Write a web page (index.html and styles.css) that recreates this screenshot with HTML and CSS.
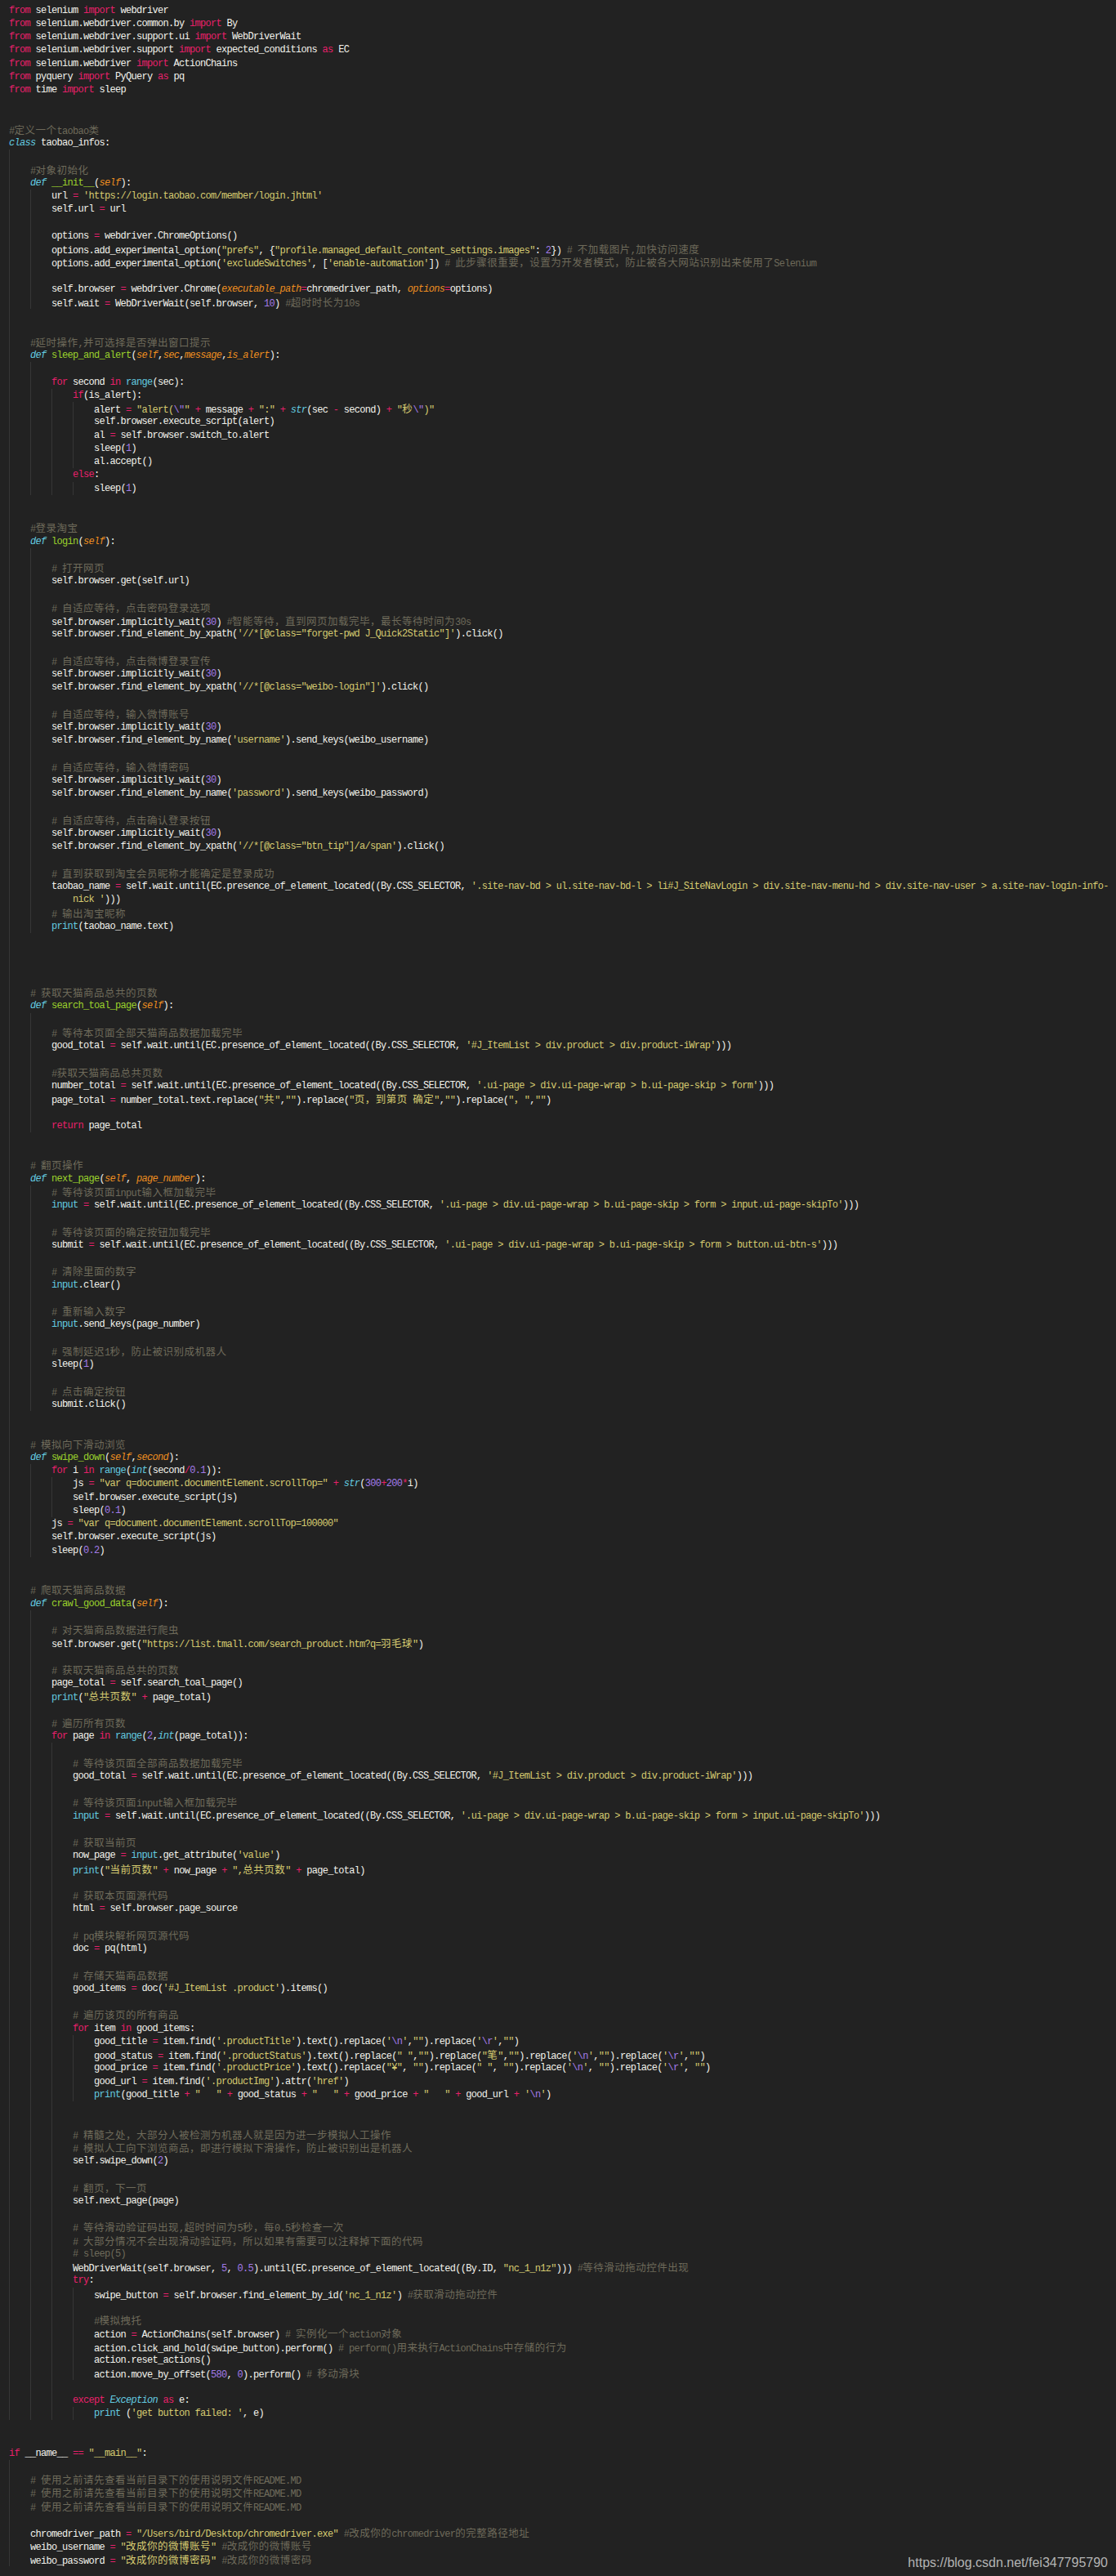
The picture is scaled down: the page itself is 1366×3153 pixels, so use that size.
FILE: index.html
```html
<!DOCTYPE html>
<html lang="zh-CN">
<head>
<meta charset="utf-8">
<title>taobao_infos.py</title>
<link rel="stylesheet" href="styles.css">
</head>
<body>
<main class="code">
<div class="l"><span class="k">from</span> selenium <span class="k">import</span> webdriver</div>
<div class="l"><span class="k">from</span> selenium.webdriver.common.by <span class="k">import</span> By</div>
<div class="l"><span class="k">from</span> selenium.webdriver.support.ui <span class="k">import</span> WebDriverWait</div>
<div class="l"><span class="k">from</span> selenium.webdriver.support <span class="k">import</span> expected_conditions <span class="k">as</span> EC</div>
<div class="l"><span class="k">from</span> selenium.webdriver <span class="k">import</span> ActionChains</div>
<div class="l"><span class="k">from</span> pyquery <span class="k">import</span> PyQuery <span class="k">as</span> pq</div>
<div class="l"><span class="k">from</span> time <span class="k">import</span> sleep</div>
<div class="l"></div>
<div class="l"></div>
<div class="l"><span class="c">#<span class="z">定义一个</span>taobao<span class="z">类</span></span></div>
<div class="l"><span class="d">class</span> taobao_infos:</div>
<div class="l g1"></div>
<div class="l g1">    <span class="c">#<span class="z">对象初始化</span></span></div>
<div class="l g1">    <span class="d">def</span> <span class="f">__init__</span>(<span class="p">self</span>):</div>
<div class="l g2">        url <span class="k">=</span> <span class="s">'https://login.taobao.com/member/login.jhtml'</span></div>
<div class="l g2">        self.url <span class="k">=</span> url</div>
<div class="l g2"></div>
<div class="l g2">        options <span class="k">=</span> webdriver.ChromeOptions()</div>
<div class="l g2">        options.add_experimental_option(<span class="s">"prefs"</span>, {<span class="s">"profile.managed_default_content_settings.images"</span>: <span class="n">2</span>}) <span class="c"># <span class="z">不加载图片</span>,<span class="z">加快访问速度</span></span></div>
<div class="l g2">        options.add_experimental_option(<span class="s">'excludeSwitches'</span>, [<span class="s">'enable-automation'</span>]) <span class="c"># <span class="z">此步骤很重要&#65292;设置为开发者模式&#65292;防止被各大网站识别出来使用了</span>Selenium</span></div>
<div class="l g2"></div>
<div class="l g2">        self.browser <span class="k">=</span> webdriver.Chrome(<span class="p">executable_path</span><span class="k">=</span>chromedriver_path, <span class="p">options</span><span class="k">=</span>options)</div>
<div class="l g2">        self.wait <span class="k">=</span> WebDriverWait(self.browser, <span class="n">10</span>) <span class="c">#<span class="z">超时时长为</span>10s</span></div>
<div class="l g1"></div>
<div class="l g1"></div>
<div class="l g1">    <span class="c">#<span class="z">延时操作</span>,<span class="z">并可选择是否弹出窗口提示</span></span></div>
<div class="l g1">    <span class="d">def</span> <span class="f">sleep_and_alert</span>(<span class="p">self</span>,<span class="p">sec</span>,<span class="p">message</span>,<span class="p">is_alert</span>):</div>
<div class="l g2"></div>
<div class="l g2">        <span class="k">for</span> second <span class="k">in</span> <span class="b">range</span>(sec):</div>
<div class="l g3">            <span class="k">if</span>(is_alert):</div>
<div class="l g4">                alert <span class="k">=</span> <span class="s">"alert(<span class="n">\"</span>"</span> <span class="k">+</span> message <span class="k">+</span> <span class="s">":"</span> <span class="k">+</span> <span class="d">str</span>(sec <span class="k">-</span> second) <span class="k">+</span> <span class="s">"<span class="z">秒</span><span class="n">\"</span>)"</span></div>
<div class="l g4">                self.browser.execute_script(alert)</div>
<div class="l g4">                al <span class="k">=</span> self.browser.switch_to.alert</div>
<div class="l g4">                sleep(<span class="n">1</span>)</div>
<div class="l g4">                al.accept()</div>
<div class="l g3">            <span class="k">else</span>:</div>
<div class="l g4">                sleep(<span class="n">1</span>)</div>
<div class="l g1"></div>
<div class="l g1"></div>
<div class="l g1">    <span class="c">#<span class="z">登录淘宝</span></span></div>
<div class="l g1">    <span class="d">def</span> <span class="f">login</span>(<span class="p">self</span>):</div>
<div class="l g2"></div>
<div class="l g2">        <span class="c"># <span class="z">打开网页</span></span></div>
<div class="l g2">        self.browser.get(self.url)</div>
<div class="l g2"></div>
<div class="l g2">        <span class="c"># <span class="z">自适应等待&#65292;点击密码登录选项</span></span></div>
<div class="l g2">        self.browser.implicitly_wait(<span class="n">30</span>) <span class="c">#<span class="z">智能等待&#65292;直到网页加载完毕&#65292;最长等待时间为</span>30s</span></div>
<div class="l g2">        self.browser.find_element_by_xpath(<span class="s">'//*[@class="forget-pwd J_Quick2Static"]'</span>).click()</div>
<div class="l g2"></div>
<div class="l g2">        <span class="c"># <span class="z">自适应等待&#65292;点击微博登录宣传</span></span></div>
<div class="l g2">        self.browser.implicitly_wait(<span class="n">30</span>)</div>
<div class="l g2">        self.browser.find_element_by_xpath(<span class="s">'//*[@class="weibo-login"]'</span>).click()</div>
<div class="l g2"></div>
<div class="l g2">        <span class="c"># <span class="z">自适应等待&#65292;输入微博账号</span></span></div>
<div class="l g2">        self.browser.implicitly_wait(<span class="n">30</span>)</div>
<div class="l g2">        self.browser.find_element_by_name(<span class="s">'username'</span>).send_keys(weibo_username)</div>
<div class="l g2"></div>
<div class="l g2">        <span class="c"># <span class="z">自适应等待&#65292;输入微博密码</span></span></div>
<div class="l g2">        self.browser.implicitly_wait(<span class="n">30</span>)</div>
<div class="l g2">        self.browser.find_element_by_name(<span class="s">'password'</span>).send_keys(weibo_password)</div>
<div class="l g2"></div>
<div class="l g2">        <span class="c"># <span class="z">自适应等待&#65292;点击确认登录按钮</span></span></div>
<div class="l g2">        self.browser.implicitly_wait(<span class="n">30</span>)</div>
<div class="l g2">        self.browser.find_element_by_xpath(<span class="s">'//*[@class="btn_tip"]/a/span'</span>).click()</div>
<div class="l g2"></div>
<div class="l g2">        <span class="c"># <span class="z">直到获取到淘宝会员昵称才能确定是登录成功</span></span></div>
<div class="l g2">        taobao_name <span class="k">=</span> self.wait.until(EC.presence_of_element_located((By.CSS_SELECTOR, <span class="s">'.site-nav-bd &gt; ul.site-nav-bd-l &gt; li#J_SiteNavLogin &gt; div.site-nav-menu-hd &gt; div.site-nav-user &gt; a.site-nav-login-info-</span></div>
<div class="l g2">            <span class="s">nick '</span>)))</div>
<div class="l g2">        <span class="c"># <span class="z">输出淘宝昵称</span></span></div>
<div class="l g2">        <span class="b">print</span>(taobao_name.text)</div>
<div class="l g1"></div>
<div class="l g1"></div>
<div class="l g1"></div>
<div class="l g1"></div>
<div class="l g1">    <span class="c"># <span class="z">获取天猫商品总共的页数</span></span></div>
<div class="l g1">    <span class="d">def</span> <span class="f">search_toal_page</span>(<span class="p">self</span>):</div>
<div class="l g2"></div>
<div class="l g2">        <span class="c"># <span class="z">等待本页面全部天猫商品数据加载完毕</span></span></div>
<div class="l g2">        good_total <span class="k">=</span> self.wait.until(EC.presence_of_element_located((By.CSS_SELECTOR, <span class="s">'#J_ItemList &gt; div.product &gt; div.product-iWrap'</span>)))</div>
<div class="l g2"></div>
<div class="l g2">        <span class="c">#<span class="z">获取天猫商品总共页数</span></span></div>
<div class="l g2">        number_total <span class="k">=</span> self.wait.until(EC.presence_of_element_located((By.CSS_SELECTOR, <span class="s">'.ui-page &gt; div.ui-page-wrap &gt; b.ui-page-skip &gt; form'</span>)))</div>
<div class="l g2">        page_total <span class="k">=</span> number_total.text.replace(<span class="s">"<span class="z">共</span>"</span>,<span class="s">""</span>).replace(<span class="s">"<span class="z">页&#65292;到第页</span> <span class="z">确定</span>"</span>,<span class="s">""</span>).replace(<span class="s">"<span class="z">&#65292;</span>"</span>,<span class="s">""</span>)</div>
<div class="l g2"></div>
<div class="l g2">        <span class="k">return</span> page_total</div>
<div class="l g1"></div>
<div class="l g1"></div>
<div class="l g1">    <span class="c"># <span class="z">翻页操作</span></span></div>
<div class="l g1">    <span class="d">def</span> <span class="f">next_page</span>(<span class="p">self</span>, <span class="p">page_number</span>):</div>
<div class="l g2">        <span class="c"># <span class="z">等待该页面</span>input<span class="z">输入框加载完毕</span></span></div>
<div class="l g2">        <span class="b">input</span> <span class="k">=</span> self.wait.until(EC.presence_of_element_located((By.CSS_SELECTOR, <span class="s">'.ui-page &gt; div.ui-page-wrap &gt; b.ui-page-skip &gt; form &gt; input.ui-page-skipTo'</span>)))</div>
<div class="l g2"></div>
<div class="l g2">        <span class="c"># <span class="z">等待该页面的确定按钮加载完毕</span></span></div>
<div class="l g2">        submit <span class="k">=</span> self.wait.until(EC.presence_of_element_located((By.CSS_SELECTOR, <span class="s">'.ui-page &gt; div.ui-page-wrap &gt; b.ui-page-skip &gt; form &gt; button.ui-btn-s'</span>)))</div>
<div class="l g2"></div>
<div class="l g2">        <span class="c"># <span class="z">清除里面的数字</span></span></div>
<div class="l g2">        <span class="b">input</span>.clear()</div>
<div class="l g2"></div>
<div class="l g2">        <span class="c"># <span class="z">重新输入数字</span></span></div>
<div class="l g2">        <span class="b">input</span>.send_keys(page_number)</div>
<div class="l g2"></div>
<div class="l g2">        <span class="c"># <span class="z">强制延迟</span>1<span class="z">秒&#65292;防止被识别成机器人</span></span></div>
<div class="l g2">        sleep(<span class="n">1</span>)</div>
<div class="l g2"></div>
<div class="l g2">        <span class="c"># <span class="z">点击确定按钮</span></span></div>
<div class="l g2">        submit.click()</div>
<div class="l g1"></div>
<div class="l g1"></div>
<div class="l g1">    <span class="c"># <span class="z">模拟向下滑动浏览</span></span></div>
<div class="l g1">    <span class="d">def</span> <span class="f">swipe_down</span>(<span class="p">self</span>,<span class="p">second</span>):</div>
<div class="l g2">        <span class="k">for</span> i <span class="k">in</span> <span class="b">range</span>(<span class="d">int</span>(second<span class="k">/</span><span class="n">0.1</span>)):</div>
<div class="l g3">            js <span class="k">=</span> <span class="s">"var q=document.documentElement.scrollTop="</span> <span class="k">+</span> <span class="d">str</span>(<span class="n">300</span><span class="k">+</span><span class="n">200</span><span class="k">*</span>i)</div>
<div class="l g3">            self.browser.execute_script(js)</div>
<div class="l g3">            sleep(<span class="n">0.1</span>)</div>
<div class="l g2">        js <span class="k">=</span> <span class="s">"var q=document.documentElement.scrollTop=100000"</span></div>
<div class="l g2">        self.browser.execute_script(js)</div>
<div class="l g2">        sleep(<span class="n">0.2</span>)</div>
<div class="l g1"></div>
<div class="l g1"></div>
<div class="l g1">    <span class="c"># <span class="z">爬取天猫商品数据</span></span></div>
<div class="l g1">    <span class="d">def</span> <span class="f">crawl_good_data</span>(<span class="p">self</span>):</div>
<div class="l g2"></div>
<div class="l g2">        <span class="c"># <span class="z">对天猫商品数据进行爬虫</span></span></div>
<div class="l g2">        self.browser.get(<span class="s">"https://list.tmall.com/search_product.htm?q=<span class="z">羽毛球</span>"</span>)</div>
<div class="l g2"></div>
<div class="l g2">        <span class="c"># <span class="z">获取天猫商品总共的页数</span></span></div>
<div class="l g2">        page_total <span class="k">=</span> self.search_toal_page()</div>
<div class="l g2">        <span class="b">print</span>(<span class="s">"<span class="z">总共页数</span>"</span> <span class="k">+</span> page_total)</div>
<div class="l g2"></div>
<div class="l g2">        <span class="c"># <span class="z">遍历所有页数</span></span></div>
<div class="l g2">        <span class="k">for</span> page <span class="k">in</span> <span class="b">range</span>(<span class="n">2</span>,<span class="d">int</span>(page_total)):</div>
<div class="l g3"></div>
<div class="l g3">            <span class="c"># <span class="z">等待该页面全部商品数据加载完毕</span></span></div>
<div class="l g3">            good_total <span class="k">=</span> self.wait.until(EC.presence_of_element_located((By.CSS_SELECTOR, <span class="s">'#J_ItemList &gt; div.product &gt; div.product-iWrap'</span>)))</div>
<div class="l g3"></div>
<div class="l g3">            <span class="c"># <span class="z">等待该页面</span>input<span class="z">输入框加载完毕</span></span></div>
<div class="l g3">            <span class="b">input</span> <span class="k">=</span> self.wait.until(EC.presence_of_element_located((By.CSS_SELECTOR, <span class="s">'.ui-page &gt; div.ui-page-wrap &gt; b.ui-page-skip &gt; form &gt; input.ui-page-skipTo'</span>)))</div>
<div class="l g3"></div>
<div class="l g3">            <span class="c"># <span class="z">获取当前页</span></span></div>
<div class="l g3">            now_page <span class="k">=</span> <span class="b">input</span>.get_attribute(<span class="s">'value'</span>)</div>
<div class="l g3">            <span class="b">print</span>(<span class="s">"<span class="z">当前页数</span>"</span> <span class="k">+</span> now_page <span class="k">+</span> <span class="s">",<span class="z">总共页数</span>"</span> <span class="k">+</span> page_total)</div>
<div class="l g3"></div>
<div class="l g3">            <span class="c"># <span class="z">获取本页面源代码</span></span></div>
<div class="l g3">            html <span class="k">=</span> self.browser.page_source</div>
<div class="l g3"></div>
<div class="l g3">            <span class="c"># pq<span class="z">模块解析网页源代码</span></span></div>
<div class="l g3">            doc <span class="k">=</span> pq(html)</div>
<div class="l g3"></div>
<div class="l g3">            <span class="c"># <span class="z">存储天猫商品数据</span></span></div>
<div class="l g3">            good_items <span class="k">=</span> doc(<span class="s">'#J_ItemList .product'</span>).items()</div>
<div class="l g3"></div>
<div class="l g3">            <span class="c"># <span class="z">遍历该页的所有商品</span></span></div>
<div class="l g3">            <span class="k">for</span> item <span class="k">in</span> good_items:</div>
<div class="l g4">                good_title <span class="k">=</span> item.find(<span class="s">'.productTitle'</span>).text().replace(<span class="s">'<span class="n">\n</span>'</span>,<span class="s">""</span>).replace(<span class="s">'<span class="n">\r</span>'</span>,<span class="s">""</span>)</div>
<div class="l g4">                good_status <span class="k">=</span> item.find(<span class="s">'.productStatus'</span>).text().replace(<span class="s">" "</span>,<span class="s">""</span>).replace(<span class="s">"<span class="z">笔</span>"</span>,<span class="s">""</span>).replace(<span class="s">'<span class="n">\n</span>'</span>,<span class="s">""</span>).replace(<span class="s">'<span class="n">\r</span>'</span>,<span class="s">""</span>)</div>
<div class="l g4">                good_price <span class="k">=</span> item.find(<span class="s">'.productPrice'</span>).text().replace(<span class="s">"¥"</span>, <span class="s">""</span>).replace(<span class="s">" "</span>, <span class="s">""</span>).replace(<span class="s">'<span class="n">\n</span>'</span>, <span class="s">""</span>).replace(<span class="s">'<span class="n">\r</span>'</span>, <span class="s">""</span>)</div>
<div class="l g4">                good_url <span class="k">=</span> item.find(<span class="s">'.productImg'</span>).attr(<span class="s">'href'</span>)</div>
<div class="l g4">                <span class="b">print</span>(good_title <span class="k">+</span> <span class="s">"   "</span> <span class="k">+</span> good_status <span class="k">+</span> <span class="s">"   "</span> <span class="k">+</span> good_price <span class="k">+</span> <span class="s">"   "</span> <span class="k">+</span> good_url <span class="k">+</span> <span class="s">'<span class="n">\n</span>'</span>)</div>
<div class="l g3"></div>
<div class="l g3"></div>
<div class="l g3">            <span class="c"># <span class="z">精髓之处&#65292;大部分人被检测为机器人就是因为进一步模拟人工操作</span></span></div>
<div class="l g3">            <span class="c"># <span class="z">模拟人工向下浏览商品&#65292;即进行模拟下滑操作&#65292;防止被识别出是机器人</span></span></div>
<div class="l g3">            self.swipe_down(<span class="n">2</span>)</div>
<div class="l g3"></div>
<div class="l g3">            <span class="c"># <span class="z">翻页&#65292;下一页</span></span></div>
<div class="l g3">            self.next_page(page)</div>
<div class="l g3"></div>
<div class="l g3">            <span class="c"># <span class="z">等待滑动验证码出现</span>,<span class="z">超时时间为</span>5<span class="z">秒&#65292;每</span>0.5<span class="z">秒检查一次</span></span></div>
<div class="l g3">            <span class="c"># <span class="z">大部分情况不会出现滑动验证码&#65292;所以如果有需要可以注释掉下面的代码</span></span></div>
<div class="l g3">            <span class="c"># sleep(5)</span></div>
<div class="l g3">            WebDriverWait(self.browser, <span class="n">5</span>, <span class="n">0.5</span>).until(EC.presence_of_element_located((By.ID, <span class="s">"nc_1_n1z"</span>))) <span class="c">#<span class="z">等待滑动拖动控件出现</span></span></div>
<div class="l g3">            <span class="k">try</span>:</div>
<div class="l g4">                swipe_button <span class="k">=</span> self.browser.find_element_by_id(<span class="s">'nc_1_n1z'</span>) <span class="c">#<span class="z">获取滑动拖动控件</span></span></div>
<div class="l g4"></div>
<div class="l g4">                <span class="c">#<span class="z">模拟拽托</span></span></div>
<div class="l g4">                action <span class="k">=</span> ActionChains(self.browser) <span class="c"># <span class="z">实例化一个</span>action<span class="z">对象</span></span></div>
<div class="l g4">                action.click_and_hold(swipe_button).perform() <span class="c"># perform()<span class="z">用来执行</span>ActionChains<span class="z">中存储的行为</span></span></div>
<div class="l g4">                action.reset_actions()</div>
<div class="l g4">                action.move_by_offset(<span class="n">580</span>, <span class="n">0</span>).perform() <span class="c"># <span class="z">移动滑块</span></span></div>
<div class="l g3"></div>
<div class="l g3">            <span class="k">except</span> <span class="d">Exception</span> <span class="k">as</span> e:</div>
<div class="l g4">                <span class="b">print</span> (<span class="s">'get button failed: '</span>, e)</div>
<div class="l"></div>
<div class="l"></div>
<div class="l"><span class="k">if</span> __name__ <span class="k">==</span> <span class="s">"__main__"</span>:</div>
<div class="l g1"></div>
<div class="l g1">    <span class="c"># <span class="z">使用之前请先查看当前目录下的使用说明文件</span>README.MD</span></div>
<div class="l g1">    <span class="c"># <span class="z">使用之前请先查看当前目录下的使用说明文件</span>README.MD</span></div>
<div class="l g1">    <span class="c"># <span class="z">使用之前请先查看当前目录下的使用说明文件</span>README.MD</span></div>
<div class="l g1"></div>
<div class="l g1">    chromedriver_path <span class="k">=</span> <span class="s">"/Users/bird/Desktop/chromedriver.exe"</span> <span class="c">#<span class="z">改成你的</span>chromedriver<span class="z">的完整路径地址</span></span></div>
<div class="l g1">    weibo_username <span class="k">=</span> <span class="s">"<span class="z">改成你的微博账号</span>"</span> <span class="c">#<span class="z">改成你的微博账号</span></span></div>
<div class="l g1">    weibo_password <span class="k">=</span> <span class="s">"<span class="z">改成你的微博密码</span>"</span> <span class="c">#<span class="z">改成你的微博密码</span></span></div>
</main>
<a class="mark">https://blog.csdn.net/fei347795790</a>
</body>
</html>
```

FILE: styles.css
```css
html, body {
  margin: 0;
  padding: 0;
  background: #222222;
}
body {
  position: relative;
  height: 3153px;
  overflow: hidden;
  color: #f2f2ec;
  font-family: "Liberation Mono", "Noto Sans CJK SC", monospace;
  font-size: 12px;
  letter-spacing: -0.7px;
}
.code {
  display: flex;
  flex-direction: column;
  padding-top: 4.5px;
}
.l {
  height: 16.25px;
  line-height: 16.25px;
  padding-left: 11px;
  white-space: pre;
  --guide: linear-gradient(#363636, #363636);
}
.g1 {
  background: var(--guide) 11px 0 / 1px 100% no-repeat;
}
.g2 {
  background:
    var(--guide) 11px 0 / 1px 100% no-repeat,
    var(--guide) 37px 0 / 1px 100% no-repeat;
}
.g3 {
  background:
    var(--guide) 11px 0 / 1px 100% no-repeat,
    var(--guide) 37px 0 / 1px 100% no-repeat,
    var(--guide) 63px 0 / 1px 100% no-repeat;
}
.g4 {
  background:
    var(--guide) 11px 0 / 1px 100% no-repeat,
    var(--guide) 37px 0 / 1px 100% no-repeat,
    var(--guide) 63px 0 / 1px 100% no-repeat,
    var(--guide) 89px 0 / 1px 100% no-repeat;
}
.k { color: #e8206a; }
.s { color: #d6cb70; }
.c { color: #6e6a5a; }
.f { color: #9bd22c; }
.b { color: #62cbe0; }
.d { color: #62cbe0; font-style: italic; }
.p { color: #ee8e20; font-style: italic; }
.n { color: #a27be8; }
.z {
  font-family: "Noto Sans CJK SC", sans-serif;
  font-size: 12.5px;
  letter-spacing: 0.5px;
}
.mark {
  position: absolute;
  right: 10px;
  bottom: 7px;
  color: #b4b4b4;
  font-family: "Liberation Sans", sans-serif;
  font-size: 16px;
  letter-spacing: 0;
}
```
